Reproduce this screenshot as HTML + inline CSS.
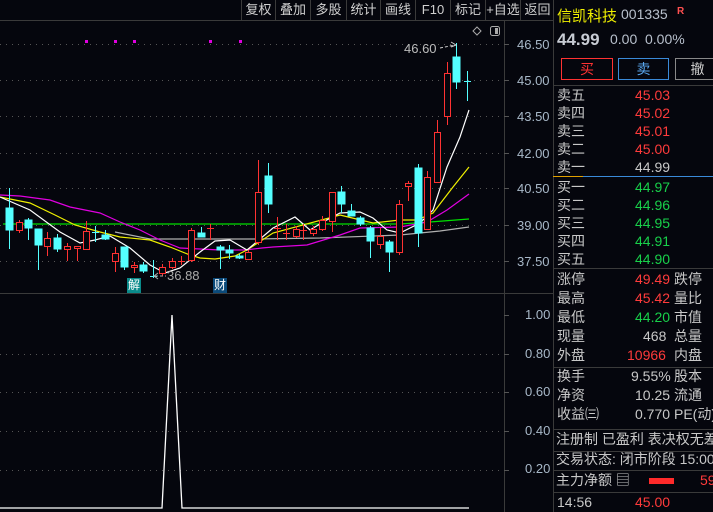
<!DOCTYPE html>
<html><head><meta charset="utf-8"><style>
*{margin:0;padding:0;box-sizing:border-box}
body{width:713px;height:512px;background:#05060d;overflow:hidden;position:relative;font-family:"Liberation Sans","Noto Sans CJK SC",sans-serif;color:#c8c8c8}
.a{position:absolute;white-space:nowrap}
.tb{position:absolute;top:0;height:20px;font-size:13px;color:#d0d0d0;line-height:20px;text-align:center;border-left:1px solid #3a3a3a}
.r{position:absolute;font-size:14px;height:19px;line-height:19px;white-space:nowrap}
.red{color:#ff3b3b}.grn{color:#18d04a}.wh{color:#c8c8c8}
.hl{position:absolute;left:553px;width:160px;height:1px;background:#3a3a3a}
</style></head><body>
<svg width="713" height="512" style="position:absolute;left:0;top:0">
<g stroke="#555" stroke-dasharray="1 5" stroke-width="1">
<line x1="0" y1="44.5" x2="500" y2="44.5"/><line x1="0" y1="80.5" x2="500" y2="80.5"/><line x1="0" y1="116.5" x2="500" y2="116.5"/><line x1="0" y1="153.5" x2="500" y2="153.5"/><line x1="0" y1="188.5" x2="500" y2="188.5"/><line x1="0" y1="225.5" x2="500" y2="225.5"/><line x1="0" y1="261.5" x2="500" y2="261.5"/>
<line x1="0" y1="354.5" x2="500" y2="354.5"/><line x1="0" y1="392.5" x2="500" y2="392.5"/><line x1="0" y1="431.5" x2="500" y2="431.5"/><line x1="0" y1="470.5" x2="500" y2="470.5"/>
</g>
<line x1="0" y1="20.5" x2="553" y2="20.5" stroke="#3a3a3a"/>
<line x1="0" y1="293.5" x2="553" y2="293.5" stroke="#3a3a3a"/>
<line x1="504.5" y1="20" x2="504.5" y2="512" stroke="#3a3a3a"/>
<line x1="553.5" y1="0" x2="553.5" y2="512" stroke="#3a3a3a"/>
<g stroke="#555"><line x1="504" y1="44.5" x2="509" y2="44.5"/><line x1="504" y1="80.5" x2="509" y2="80.5"/><line x1="504" y1="116.5" x2="509" y2="116.5"/><line x1="504" y1="153.5" x2="509" y2="153.5"/><line x1="504" y1="188.5" x2="509" y2="188.5"/><line x1="504" y1="225.5" x2="509" y2="225.5"/><line x1="504" y1="261.5" x2="509" y2="261.5"/>
<line x1="504" y1="315.5" x2="509" y2="315.5"/><line x1="504" y1="354.5" x2="509" y2="354.5"/><line x1="504" y1="392.5" x2="509" y2="392.5"/><line x1="504" y1="431.5" x2="509" y2="431.5"/><line x1="504" y1="470.5" x2="509" y2="470.5"/></g>
<!-- MAs -->
<polyline fill="none" stroke="#00e000" stroke-width="1.3" points="3,224 255,224 300,224 400,224 430,222 469,219"/>
<polyline fill="none" stroke="#b0b0b0" stroke-width="1.2" points="115,232 150,239 255,239 320,238 400,235 440,231 469,227"/>
<polyline fill="none" stroke="#e000e0" stroke-width="1.2" points="0,195 20,196 50,200 70,207 100,213 120,222 140,230 160,240 180,248 200,249 220,250 245,250 262,248 273,247 307,245 340,235 360,228 400,227 427,222 447,210 469,194"/>
<polyline fill="none" stroke="#f0f000" stroke-width="1.2" points="0,197 30,203 55,215 75,225 100,232 120,237 150,240 170,247 190,255 200,258 215,259 235,256 247,250 273,233 340,215 373,223 400,220 417,220 433,213 453,187 469,167"/>
<polyline fill="none" stroke="#fff" stroke-width="1.2" points="0,197 30,210 60,232 80,243 95,240 110,236 130,248 150,265 165,273 180,268 200,252 215,241 230,240 247,250 273,228 295,217 310,230 323,222 340,213 360,212 373,218 387,230 400,233 420,223 433,210 447,167 460,137 469,110"/>
<!-- candles: cyan -->
<g stroke="#54ffff" fill="#54ffff">
<line x1="9.5" y1="188" x2="9.5" y2="249"/><rect x="6" y="208" width="7" height="22"/>
<line x1="28.5" y1="218" x2="28.5" y2="240"/><rect x="25" y="220" width="7" height="8"/>
<line x1="38.5" y1="229" x2="38.5" y2="270"/><rect x="35" y="229" width="7" height="16"/>
<line x1="57.5" y1="234" x2="57.5" y2="252"/><rect x="54" y="238" width="7" height="11"/>
<line x1="95.5" y1="226" x2="95.5" y2="242"/><line x1="92" y1="232.5" x2="99" y2="232.5"/>
<line x1="105.5" y1="230" x2="105.5" y2="240"/><rect x="102" y="235" width="7" height="4"/>
<line x1="124.5" y1="247" x2="124.5" y2="270"/><rect x="121" y="247" width="7" height="20"/>
<line x1="143.5" y1="262" x2="143.5" y2="273"/><rect x="140" y="265" width="7" height="6"/>
<line x1="153.5" y1="260" x2="153.5" y2="278"/><line x1="150" y1="276.5" x2="157" y2="276.5"/>
<line x1="201.5" y1="227" x2="201.5" y2="237"/><rect x="198" y="233" width="7" height="4"/>
<line x1="220.5" y1="245" x2="220.5" y2="269"/><rect x="217" y="247" width="7" height="3"/>
<line x1="229.5" y1="245" x2="229.5" y2="259"/><rect x="226" y="250" width="7" height="3"/>
<line x1="239.5" y1="254" x2="239.5" y2="259"/><rect x="236" y="256" width="7" height="2"/>
<line x1="268.5" y1="163" x2="268.5" y2="213"/><rect x="265" y="176" width="7" height="28"/>
<line x1="341.5" y1="186" x2="341.5" y2="213"/><rect x="338" y="192" width="7" height="12"/>
<line x1="351.5" y1="204" x2="351.5" y2="216"/><rect x="348" y="211" width="7" height="5"/>
<line x1="360.5" y1="216" x2="360.5" y2="226"/><rect x="357" y="218" width="7" height="6"/>
<line x1="370.5" y1="226" x2="370.5" y2="258"/><rect x="367" y="228" width="7" height="13"/>
<line x1="389.5" y1="240" x2="389.5" y2="272"/><rect x="386" y="242" width="7" height="10"/>
<line x1="418.5" y1="164" x2="418.5" y2="247"/><rect x="415" y="168" width="7" height="65"/>
<line x1="456.5" y1="43" x2="456.5" y2="89"/><rect x="453" y="57" width="7" height="25"/>
<line x1="467.5" y1="71" x2="467.5" y2="101"/><line x1="464" y1="81.5" x2="471" y2="81.5"/>
</g>
<!-- candles: red hollow -->
<g stroke="#ff3232" fill="#05060d">
<line x1="19.5" y1="220" x2="19.5" y2="233"/><rect x="16.5" y="222.5" width="6" height="8"/>
<line x1="47.5" y1="232" x2="47.5" y2="256"/><rect x="44.5" y="238.5" width="6" height="8"/>
<line x1="67.5" y1="243" x2="67.5" y2="261"/><rect x="64.5" y="246.5" width="6" height="3"/>
<line x1="77.5" y1="246" x2="77.5" y2="261"/><rect x="74.5" y="246.5" width="6" height="2"/>
<line x1="86.5" y1="221" x2="86.5" y2="231"/><rect x="83.5" y="231.5" width="6" height="18"/>
<line x1="115.5" y1="247" x2="115.5" y2="272"/><rect x="112.5" y="253.5" width="6" height="8"/>
<line x1="134.5" y1="262" x2="134.5" y2="273"/><rect x="131.5" y="265.5" width="6" height="2"/>
<line x1="162.5" y1="264" x2="162.5" y2="276"/><rect x="159.5" y="267.5" width="6" height="6"/>
<line x1="172.5" y1="258" x2="172.5" y2="269"/><rect x="169.5" y="261.5" width="6" height="6"/>
<line x1="181.5" y1="256" x2="181.5" y2="265"/><line x1="178" y1="261.5" x2="185" y2="261.5"/>
<line x1="191.5" y1="228" x2="191.5" y2="262"/><rect x="188.5" y="230.5" width="6" height="30"/>
<line x1="210.5" y1="224" x2="210.5" y2="240"/><line x1="207" y1="228.5" x2="214" y2="228.5"/>
<line x1="248.5" y1="250" x2="248.5" y2="260"/><rect x="245.5" y="252.5" width="6" height="7"/>
<line x1="258.5" y1="160" x2="258.5" y2="245"/><rect x="255.5" y="192.5" width="6" height="50"/>
<line x1="277.5" y1="217" x2="277.5" y2="240"/><line x1="274" y1="228.5" x2="281" y2="228.5"/>
<line x1="286.5" y1="224" x2="286.5" y2="240"/><line x1="283" y1="233.5" x2="290" y2="233.5"/>
<line x1="296.5" y1="226" x2="296.5" y2="238"/><rect x="293.5" y="229.5" width="6" height="7"/>
<line x1="303.5" y1="224" x2="303.5" y2="240"/><line x1="300" y1="230.5" x2="307" y2="230.5"/>
<line x1="313.5" y1="226" x2="313.5" y2="236"/><rect x="310.5" y="229.5" width="6" height="4"/>
<line x1="322.5" y1="216" x2="322.5" y2="231"/><rect x="319.5" y="220.5" width="6" height="9"/>
<line x1="332.5" y1="192" x2="332.5" y2="232"/><rect x="329.5" y="192.5" width="6" height="29"/>
<line x1="380.5" y1="228" x2="380.5" y2="249"/><rect x="377.5" y="236.5" width="6" height="8"/>
<line x1="399.5" y1="200" x2="399.5" y2="255"/><rect x="396.5" y="204.5" width="6" height="48"/>
<line x1="408.5" y1="181" x2="408.5" y2="201"/><rect x="405.5" y="183.5" width="6" height="3"/>
<line x1="427.5" y1="171" x2="427.5" y2="229"/><rect x="424.5" y="177.5" width="6" height="52"/>
<line x1="437.5" y1="120" x2="437.5" y2="182"/><rect x="434.5" y="132.5" width="6" height="50"/>
<line x1="447.5" y1="62" x2="447.5" y2="125"/><rect x="444.5" y="73.5" width="6" height="43"/>
</g>
<!-- markers -->
<g fill="#e000e0"><rect x="85" y="40" width="3" height="3"/><rect x="114" y="40" width="3" height="3"/><rect x="133" y="40" width="3" height="3"/><rect x="209" y="40" width="3" height="3"/><rect x="239" y="40" width="3" height="3"/></g>
<polyline fill="none" stroke="#ccc" stroke-dasharray="3 2" points="440,48 455,45"/><polyline fill="none" stroke="#ccc" points="451,42 456,45 451,47"/>
<polyline fill="none" stroke="#aaa" stroke-dasharray="3 2" points="155,276 166,276"/><polyline fill="none" stroke="#aaa" points="158,273 154,276 158,279"/>
<path d="M477 27 L481 31 L477 35 L473 31 Z" fill="none" stroke="#aaa"/>
<rect x="490.5" y="26.5" width="9" height="9" rx="2" fill="none" stroke="#aaa"/><rect x="495" y="28" width="3" height="6" fill="#aaa"/>
<!-- lower panel -->
<polyline fill="none" stroke="#fff" stroke-width="1.3" points="0,508 162,508 172,315 182,508 469,508"/>
</svg>
<div class="tb" style="left:241px;width:34px">复权</div><div class="tb" style="left:275px;width:35px">叠加</div><div class="tb" style="left:310px;width:36px">多股</div><div class="tb" style="left:346px;width:34px">统计</div><div class="tb" style="left:380px;width:35px">画线</div><div class="tb" style="left:415px;width:35px">F10</div><div class="tb" style="left:450px;width:35px">标记</div><div class="tb" style="left:485px;width:35px">+自选</div><div class="tb" style="left:520px;width:34px">返回</div>
<div class="a" style="left:404px;top:41px;font-size:13px;color:#bbb">46.60</div>
<div class="a" style="left:167px;top:268px;font-size:13px;color:#aaa">36.88</div>
<div class="a" style="left:127px;top:278px;width:14px;height:15px;background:#0a8a8a;color:#fff;font-size:12px;line-height:15px;text-align:center">解</div>
<div class="a" style="left:213px;top:278px;width:14px;height:15px;background:#0b4a7a;color:#fff;font-size:12px;line-height:15px;text-align:center">财</div>
<div style="position:absolute;left:510px;top:36px;font-size:13px;color:#a8b8c8;line-height:17px">
<div class="a" style="top:0;left:7px">46.50</div><div class="a" style="top:36px;left:7px">45.00</div><div class="a" style="top:72px;left:7px">43.50</div><div class="a" style="top:109px;left:7px">42.00</div><div class="a" style="top:144px;left:7px">40.50</div><div class="a" style="top:181px;left:7px">39.00</div><div class="a" style="top:217px;left:7px">37.50</div>
<div class="a" style="top:270px;left:15px">1.00</div><div class="a" style="top:309px;left:15px">0.80</div><div class="a" style="top:347px;left:15px">0.60</div><div class="a" style="top:386px;left:15px">0.40</div><div class="a" style="top:424px;left:15px">0.20</div>
</div>
<!-- right panel -->
<div class="a" style="left:557px;top:5px;font-size:15px;color:#f0f000">信凯科技</div>
<div class="a" style="left:621px;top:6px;font-size:14px;color:#b8c0cc">001335</div>
<div class="a" style="left:677px;top:6px;font-size:10px;color:#ff5050;font-weight:bold">R</div>
<div class="a" style="left:557px;top:30px;font-size:17px;color:#c8ccd4;font-weight:bold">44.99</div>
<div class="a" style="left:610px;top:31px;font-size:14px;color:#b8c0cc">0.00</div>
<div class="a" style="left:645px;top:31px;font-size:14px;color:#b8c0cc">0.00%</div>
<div class="a" style="left:561px;top:58px;width:52px;height:22px;border:1px solid #ff3232;color:#ff3232;font-size:14px;text-align:center;line-height:20px">买</div>
<div class="a" style="left:618px;top:58px;width:51px;height:22px;border:1px solid #3a8ad8;color:#5aa8f0;font-size:14px;text-align:center;line-height:20px">卖</div>
<div class="a" style="left:675px;top:58px;width:45px;height:22px;border:1px solid #888;color:#ccc;font-size:14px;text-align:center;line-height:20px">撤</div>
<div class="hl" style="top:85px"></div>
<div class="hl" style="top:176px;background:#3a8ad8"></div><div class="a" style="left:553px;top:176px;width:30px;height:1px;background:#e0a000"></div>
<div class="hl" style="top:268px"></div><div class="hl" style="top:367px"></div><div class="hl" style="top:429px"></div><div class="hl" style="top:451px"></div><div class="hl" style="top:470px"></div><div class="hl" style="top:492px"></div>
<div style="position:absolute;left:557px;top:86px;font-size:14px">
<div class="r" style="top:0">卖五</div><div class="r red" style="top:0;left:78px">45.03</div>
<div class="r" style="top:18px">卖四</div><div class="r red" style="top:18px;left:78px">45.02</div>
<div class="r" style="top:36px">卖三</div><div class="r red" style="top:36px;left:78px">45.01</div>
<div class="r" style="top:54px">卖二</div><div class="r red" style="top:54px;left:78px">45.00</div>
<div class="r" style="top:72px">卖一</div><div class="r" style="top:72px;left:78px">44.99</div>
<div class="r" style="top:92px">买一</div><div class="r grn" style="top:92px;left:78px">44.97</div>
<div class="r" style="top:110px">买二</div><div class="r grn" style="top:110px;left:78px">44.96</div>
<div class="r" style="top:128px">买三</div><div class="r grn" style="top:128px;left:78px">44.95</div>
<div class="r" style="top:146px">买四</div><div class="r grn" style="top:146px;left:78px">44.91</div>
<div class="r" style="top:164px">买五</div><div class="r grn" style="top:164px;left:78px">44.90</div>
<div class="r" style="top:184px">涨停</div><div class="r red" style="top:184px;left:78px">49.49</div><div class="r" style="top:184px;left:117px">跌停</div>
<div class="r" style="top:203px">最高</div><div class="r red" style="top:203px;left:78px">45.42</div><div class="r" style="top:203px;left:117px">量比</div>
<div class="r" style="top:222px">最低</div><div class="r grn" style="top:222px;left:78px">44.20</div><div class="r" style="top:222px;left:117px">市值</div>
<div class="r" style="top:241px">现量</div><div class="r" style="top:241px;left:86px">468</div><div class="r" style="top:241px;left:117px">总量</div>
<div class="r" style="top:260px">外盘</div><div class="r red" style="top:260px;left:70px">10966</div><div class="r" style="top:260px;left:117px">内盘</div>
<div class="r" style="top:281px">换手</div><div class="r" style="top:281px;left:74px">9.55%</div><div class="r" style="top:281px;left:117px">股本</div>
<div class="r" style="top:300px">净资</div><div class="r" style="top:300px;left:78px">10.25</div><div class="r" style="top:300px;left:117px">流通</div>
<div class="r" style="top:319px">收益㈢</div><div class="r" style="top:319px;left:78px">0.770</div><div class="r" style="top:319px;left:117px">PE(动)</div>
<div class="r" style="top:344px;left:-1px">注册制 已盈利 表决权无差</div>
<div class="r" style="top:364px;left:-1px">交易状态: 闭市阶段 15:00</div>
<div class="r" style="top:385px;left:-1px">主力净额 ▤</div><div class="a" style="left:92px;top:392px;width:25px;height:6px;background:#ff2a2a"></div><div class="r red" style="top:385px;left:143px">59</div>
<div class="r" style="top:407px">14:56</div><div class="r red" style="top:407px;left:78px">45.00</div>
</div>
</body></html>
